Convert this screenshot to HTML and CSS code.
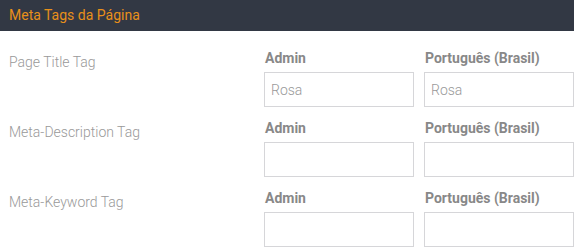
FILE: index.html
```html
<!DOCTYPE html>
<html lang="pt-BR">
<head>
    <meta charset="UTF-8">
    <meta name="viewport" content="width=device-width, initial-scale=1.0">
    <title>Meta Tags da Página</title>
    <link rel="stylesheet" href="styles.css">
</head>
<body>

    <div class="panel">
        <div class="panel-heading">Meta Tags da Página</div>

        <div class="panel-body">
            <div class="meta-row">
                <div class="meta-label">Page Title Tag</div>
                <div class="meta-field">
                    <label>Admin</label>
                    <input type="text" value="Rosa">
                </div>
                <div class="meta-field">
                    <label>Português (Brasil)</label>
                    <input type="text" value="Rosa">
                </div>
            </div>

            <div class="meta-row">
                <div class="meta-label">Meta-Description Tag</div>
                <div class="meta-field">
                    <label>Admin</label>
                    <input type="text">
                </div>
                <div class="meta-field">
                    <label>Português (Brasil)</label>
                    <input type="text">
                </div>
            </div>

            <div class="meta-row">
                <div class="meta-label">Meta-Keyword Tag</div>
                <div class="meta-field">
                    <label>Admin</label>
                    <input type="text">
                </div>
                <div class="meta-field">
                    <label>Português (Brasil)</label>
                    <input type="text">
                </div>
            </div>
        </div>
    </div>

</body>
</html>
```

FILE: styles.css
```css
* {
    margin: 0;
    padding: 0;
    box-sizing: border-box;
}
body {
    font-family: Roboto, "Liberation Sans", sans-serif;
    background: #fff;
    color: #999;
    overflow: hidden;
}
.panel-heading {
    height: 31px;
    padding: 0 9px;
    background: #323844;
    color: #e8901a;
    font-size: 14px;
    line-height: 30px;
}
.panel-body {
    padding: 6px 0 3px;
}
.meta-row {
    display: grid;
    grid-template-columns: 254px 150px 150px;
    column-gap: 10px;
    padding-top: 11px;
}
.meta-label {
    padding-left: 9px;
    padding-top: 6px;
    font-size: 14px;
    font-weight: 300;
    color: #999;
}
.meta-field label {
    display: block;
    font-size: 14px;
    font-weight: 700;
    line-height: 20px;
    color: #888;
    margin-bottom: 4px;
    padding-left: 1px;
}
.meta-field input {
    display: block;
    width: 100%;
    height: 35px;
    padding: 0 6px;
    border: 1px solid #d6d6d9;
    font-family: inherit;
    font-size: 14px;
    font-weight: 300;
    color: #999;
    outline: none;
}
```
